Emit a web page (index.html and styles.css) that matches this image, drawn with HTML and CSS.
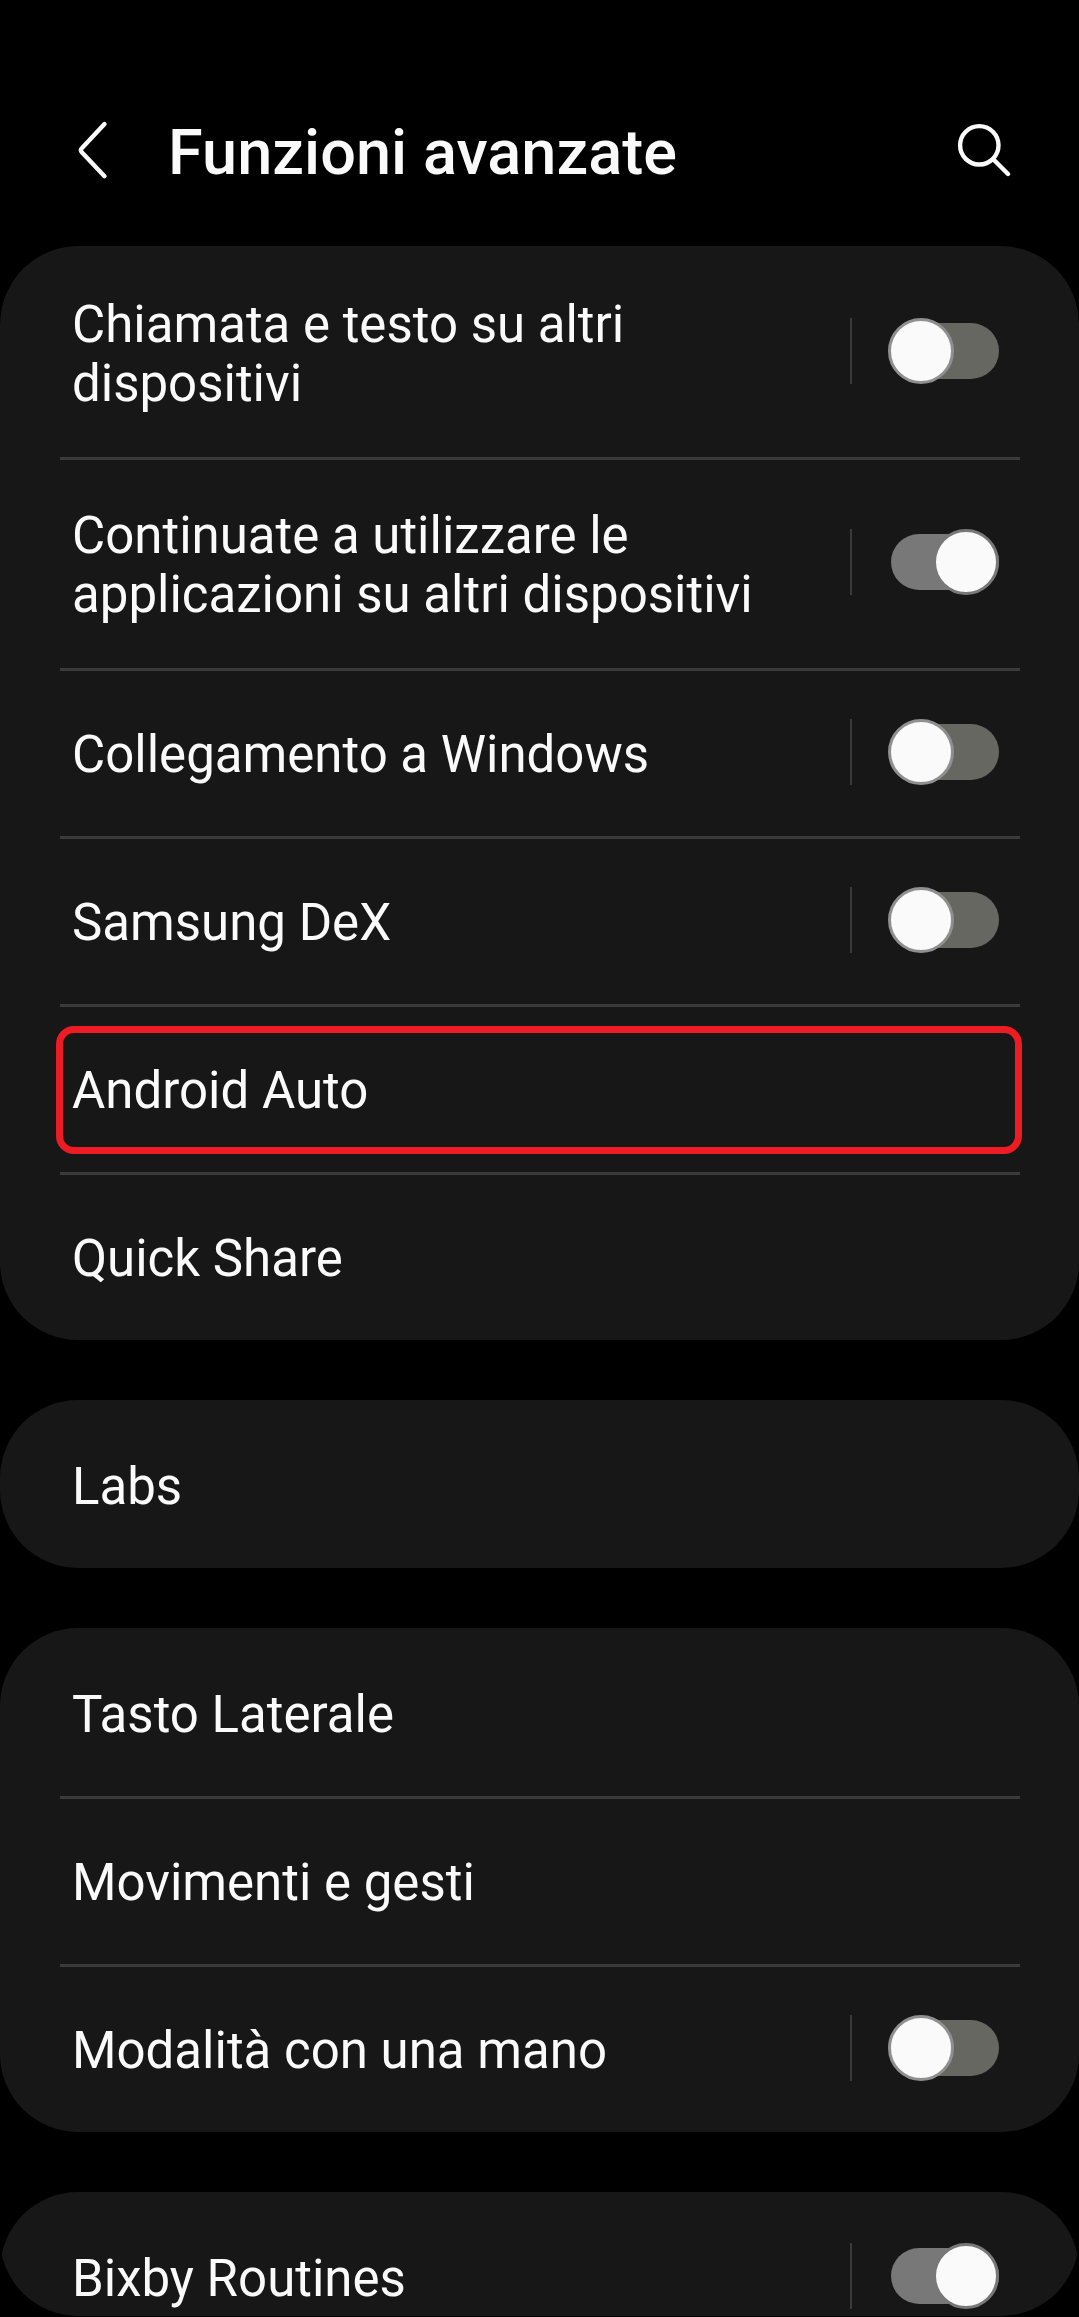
FILE: index.html
```html
<!DOCTYPE html>
<html lang="it">
<head>
<meta charset="utf-8">
<title>Funzioni avanzate</title>
<link rel="stylesheet" href="styles.css">
</head>
<body>
<header class="topbar">
  <svg class="icon-back" width="40" height="64" viewBox="0 0 40 64" fill="none" stroke="#fafafa" stroke-width="4.4" stroke-linecap="round" stroke-linejoin="round"><path d="M32.500 6 L9.800 30.200 Q7.800 32.200 9.800 34.200 L32.500 58.200"/></svg>
  <h1 class="title">Funzioni avanzate</h1>
  <svg class="icon-search" width="60" height="60" viewBox="0 0 60 60" fill="none" stroke="#fafafa" stroke-width="4.400" stroke-linecap="round"><circle cx="28.300" cy="25.300" r="19.200"/><path d="M42.500 39.500 L57 54"/></svg>
</header>
<main class="list">
  <section class="card">
    <div class="row tall"><span class="label">Chiamata e testo su altri<br>dispositivi</span><span class="control"><span class="switch"><span class="thumb"></span></span></span></div>
    <div class="row tall"><span class="label">Continuate a utilizzare le<br>applicazioni su altri dispositivi</span><span class="control"><span class="switch on"><span class="thumb"></span></span></span></div>
    <div class="row"><span class="label">Collegamento a Windows</span><span class="control"><span class="switch"><span class="thumb"></span></span></span></div>
    <div class="row"><span class="label">Samsung DeX</span><span class="control"><span class="switch"><span class="thumb"></span></span></span></div>
    <div class="row"><span class="label">Android Auto</span><span class="highlight"></span></div>
    <div class="row"><span class="label">Quick Share</span></div>
  </section>
  <section class="card">
    <div class="row"><span class="label">Labs</span></div>
  </section>
  <section class="card">
    <div class="row"><span class="label">Tasto Laterale</span></div>
    <div class="row"><span class="label">Movimenti e gesti</span></div>
    <div class="row"><span class="label">Modalità con una mano</span><span class="control"><span class="switch"><span class="thumb"></span></span></span></div>
  </section>
  <section class="card">
    <div class="row"><span class="label">Bixby Routines</span><span class="control"><span class="switch on"><span class="thumb"></span></span></span></div>
  </section>
</main>
</body>
</html>
```
FILE: styles.css
```css
* { box-sizing: border-box; }

body {
  margin: 0;
  height: 2317px;
  overflow: hidden;
  background: #000;
  color: #fafafa;
  font-family: Roboto, sans-serif;
}

.topbar {
  display: flex;
  align-items: center;
  height: 246px;
  padding: 54px 68px 0 72px;
}

.title {
  flex: 1;
  margin: 0;
  padding: 5px 0 0 56px;
  font-size: 63px;
  font-weight: 500;
  line-height: 75px;
  letter-spacing: 0.06px;
  white-space: nowrap;
}

.list {
  display: flex;
  flex-direction: column;
  gap: 60px;
  height: 2070px;
  overflow: hidden;
  border-radius: 78px;
}

.card {
  flex: none;
  border-radius: 78px;
  background: #171717;
}

.row {
  position: relative;
  display: flex;
  align-items: center;
  justify-content: space-between;
  height: 168px;
  margin: 0 59px 0 60px;
  padding: 0 21px 0 12px;
}

.row.tall { height: 211px; padding-bottom: 1px; }

.row + .row {
  border-top: 3px solid #3a3a3a;
  padding-bottom: 3px;
}

.row.tall + .row.tall { padding-bottom: 4px; }

.label {
  padding-top: 5px;
  font-size: 51px;
  line-height: 59px;
  white-space: nowrap;
}

.control {
  display: flex;
  align-items: center;
  width: 149px;
  height: 66px;
  padding-left: 39px;
  border-left: 2px solid #3a3a3a;
}

.switch {
  display: flex;
  align-items: center;
  width: 108px;
  height: 56px;
  border-radius: 28px;
  background: #666760;
}

.thumb {
  flex: none;
  width: 66px;
  height: 66px;
  margin-left: -3px;
  border: 3px solid #8f8f8f;
  border-radius: 50%;
  background: #fafafa;
}

.switch.on { justify-content: flex-end; background: #787878; }

.switch.on .thumb { margin-left: 0; border-color: #787878; }

.highlight {
  position: absolute;
  top: 19px;
  left: -4px;
  width: 966px;
  height: 128px;
  border: 7px solid #ed1c24;
  border-radius: 18px;
}
```
